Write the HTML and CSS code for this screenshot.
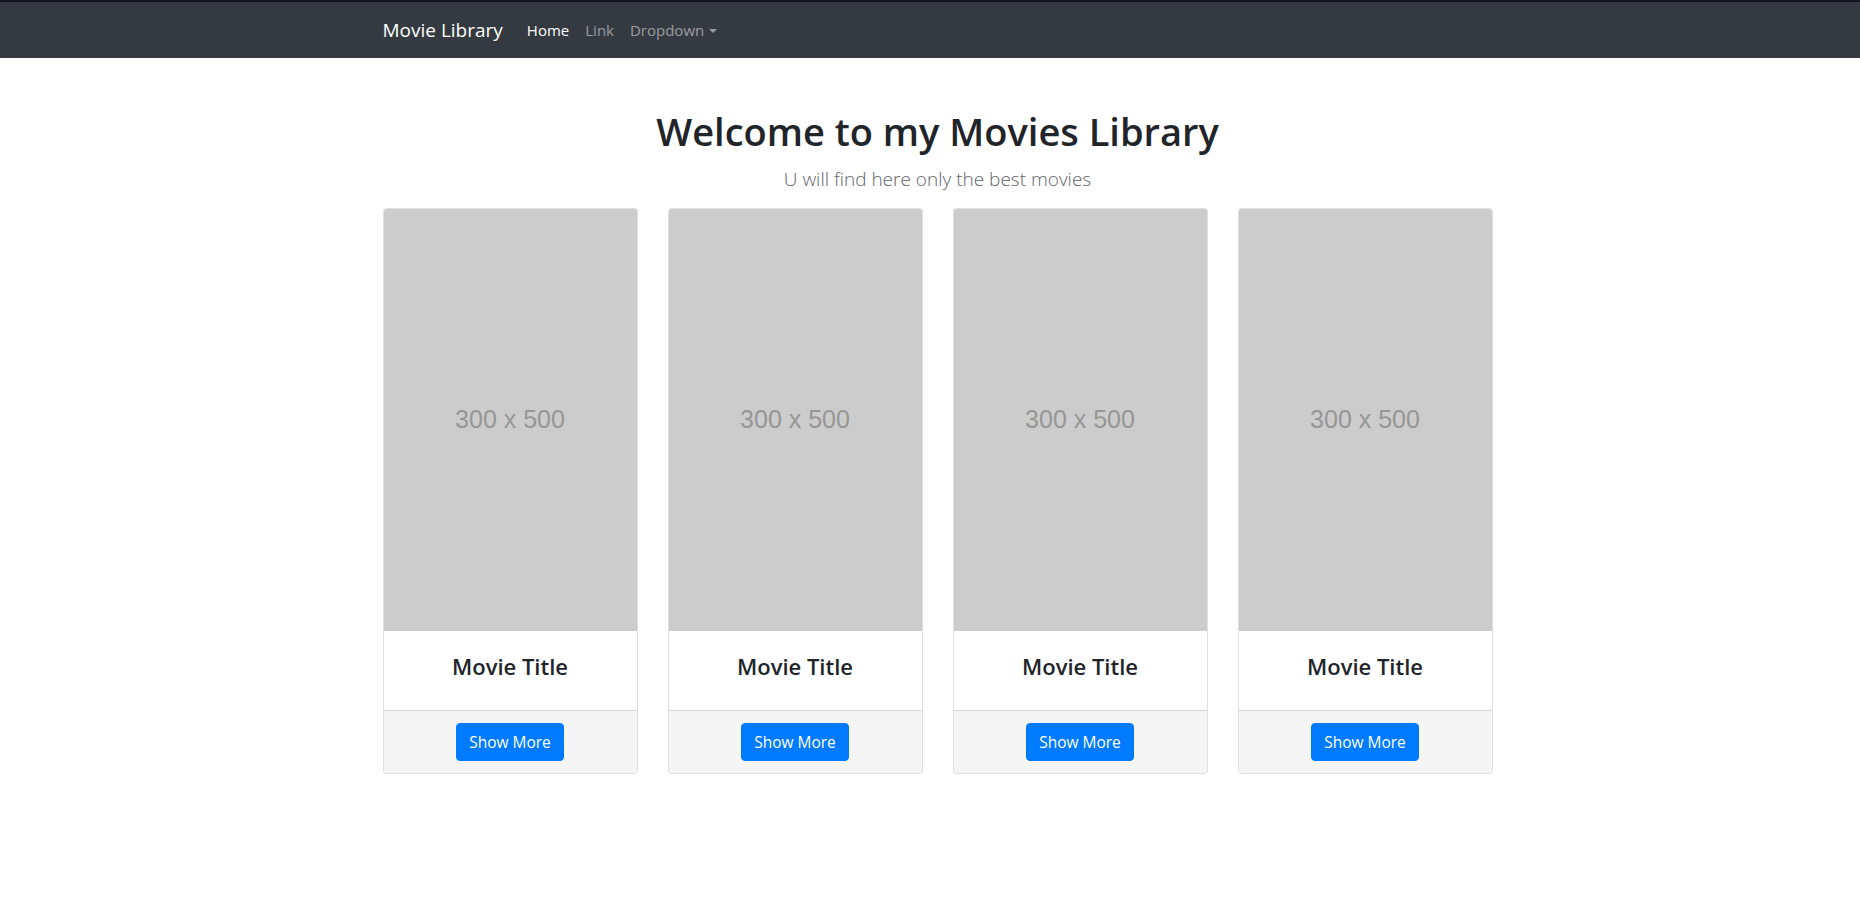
FILE: index.html
```html
<!DOCTYPE html>
<html lang="en">
<head>
<meta charset="utf-8">
<title>Movie Library</title>
<link rel="stylesheet" href="styles.css">
</head>
<body>
<nav class="navbar">
  <div class="container nav-inner">
    <a class="brand" href="#">Movie Library</a>
    <ul class="nav-links">
      <li><a class="nav-link active" href="#">Home</a></li>
      <li><a class="nav-link" href="#">Link</a></li>
      <li><a class="nav-link dropdown-toggle" href="#">Dropdown</a></li>
    </ul>
  </div>
</nav>
<main class="page">
  <div class="container">
    <header class="intro">
      <h1 class="title">Welcome to my Movies Library</h1>
      <p class="lead">U will find here only the best movies</p>
    </header>
    <div class="cards">
      <div class="card">
        <div class="poster"><span class="poster-text">300 x 500</span></div>
        <div class="card-body"><h4 class="card-title">Movie Title</h4></div>
        <div class="card-footer"><a class="btn" href="#">Show More</a></div>
      </div>
      <div class="card">
        <div class="poster"><span class="poster-text">300 x 500</span></div>
        <div class="card-body"><h4 class="card-title">Movie Title</h4></div>
        <div class="card-footer"><a class="btn" href="#">Show More</a></div>
      </div>
      <div class="card">
        <div class="poster"><span class="poster-text">300 x 500</span></div>
        <div class="card-body"><h4 class="card-title">Movie Title</h4></div>
        <div class="card-footer"><a class="btn" href="#">Show More</a></div>
      </div>
      <div class="card">
        <div class="poster"><span class="poster-text">300 x 500</span></div>
        <div class="card-body"><h4 class="card-title">Movie Title</h4></div>
        <div class="card-footer"><a class="btn" href="#">Show More</a></div>
      </div>
    </div>
  </div>
</main>
</body>
</html>
```

FILE: styles.css
```css
* { box-sizing: border-box; }
html, body { margin: 0; padding: 0; }
body {
  font-family: "Open Sans", "Noto Sans", Arial, sans-serif;
  font-size: 16px;
  line-height: 1.5;
  color: #212529;
  background: #fff;
}
a { text-decoration: none; }

.container {
  max-width: 1140px;
  margin: 0 auto;
  padding: 0 15px;
}

.navbar {
  background: #343a40;
  border-top: 2px solid #14131e;
  padding: 8px 0 8px 15px;
}
.nav-inner {
  display: flex;
  align-items: center;
}
.brand {
  color: #fff;
  font-size: 19px;
  line-height: 30px;
  padding: 5px 0;
  margin-right: 16px;
}
.nav-links {
  display: flex;
  list-style: none;
  margin: 0;
  padding: 0;
}
.nav-link {
  display: block;
  padding: 8px;
  color: rgba(255,255,255,.5);
  font-size: 15px;
  line-height: 24px;
}
.nav-link.active { color: #fff; }
.dropdown-toggle::after {
  content: "";
  display: inline-block;
  margin-left: 5px;
  vertical-align: 3px;
  border-top: 4.5px solid;
  border-right: 4.5px solid transparent;
  border-left: 4.5px solid transparent;
}

.page { padding-left: 15px; }
.intro {
  text-align: center;
  padding-top: 51px;
}
.title {
  margin: 0 0 10px;
  font-size: 38px;
  font-weight: 600;
  line-height: 1.2;
}
.lead {
  margin: 0 0 15px;
  font-size: 19px;
  font-weight: 300;
  color: #5f656b;
  line-height: 1.5;
}

.cards {
  display: grid;
  grid-template-columns: repeat(4, 1fr);
  gap: 30px;
}
.card {
  border: 1px solid rgba(0,0,0,.125);
  border-radius: 4px;
  overflow: hidden;
  background: #fff;
  display: flex;
  flex-direction: column;
}
.poster {
  height: 422px;
  background: #cccccc;
  display: flex;
  align-items: center;
  justify-content: center;
}
.poster-text {
  font-family: "Liberation Sans", Arial, sans-serif;
  font-size: 25px;
  color: #969696;
}
.card-body {
  padding: 20px;
  text-align: center;
}
.card-title {
  margin: 0 0 8px;
  font-size: 22px;
  font-weight: 600;
  line-height: 1.4;
}
.card-footer {
  background: #f5f5f5;
  border-top: 1px solid rgba(0,0,0,.125);
  padding: 12px 20px;
  text-align: center;
}
.btn {
  display: inline-block;
  background: #007bff;
  border: 1px solid #007bff;
  color: #fff;
  font-size: 15.5px;
  line-height: 24px;
  padding: 6px 12px;
  border-radius: 4px;
}
```
